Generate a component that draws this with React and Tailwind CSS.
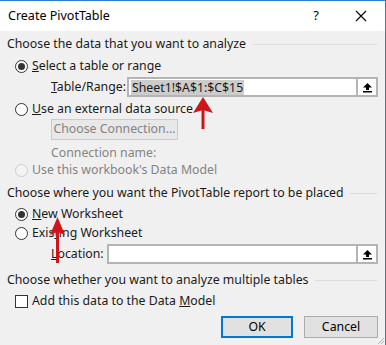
import React from "react";

const font = { fontFamily: '"Noto Sans", "Open Sans", sans-serif' };

function Radio({ checked, disabled }) {
  return (
    <span
      className={`w-[13px] h-[13px] rounded-full border flex items-center justify-center shrink-0 ${
        disabled ? "border-[#cccccc] bg-[#f4f4f4]" : "border-[#333333] bg-white"
      }`}
    >
      {checked && <span className="w-[7px] h-[7px] rounded-full bg-[#333333]" />}
    </span>
  );
}

function SectionHeader({ children }) {
  return (
    <div className="flex items-center h-4 pl-[7px] pr-[8px]">
      <span className="whitespace-nowrap">{children}</span>
      <span className="flex-1 h-px bg-[#dcdcdc] ml-[6px]" />
    </div>
  );
}

function RefInput({ value }) {
  return (
    <div className="flex-1 h-[20px] flex border-2 border-[#b4b4b4] bg-white">
      <div className="flex-1 flex items-center pl-[2px]">
        {value && <span className="bg-[#cccccc] leading-[15px] px-[1px]">{value}</span>}
      </div>
      <div className="w-[20px] border-l-2 border-[#b4b4b4] flex items-center justify-center bg-white">
        <svg width="11" height="11" viewBox="0 0 11 11">
          <path d="M5.5 1 L10 5.5 L7 5.5 L7 8 L4 8 L4 5.5 L1 5.5 Z" fill="#000" />
          <rect x="1" y="9" width="9" height="1.5" fill="#000" />
        </svg>
      </div>
    </div>
  );
}

// red annotation arrow pointing up, drawn at its own size
function RedArrow({ className, width, length, head }) {
  const mid = width / 2;
  return (
    <svg className={className} width={width} height={length} viewBox={`0 0 ${width} ${length}`}>
      <path d={`M${mid} 0 L${width} ${head} L${mid} ${head - 3} L0 ${head} Z`} fill="#d0141c" />
      <rect x={mid - 1.5} y={head - 4} width="3" height={length - head + 4} fill="#d0141c" />
    </svg>
  );
}

export default function App() {
  return (
    <div
      className="w-[386px] h-[345px] bg-[#f0f0f0] border-t border-r border-[#2b7cd3] text-[12.3px] text-[#1a1a1a] relative overflow-hidden"
      style={font}
    >
      {/* title bar */}
      <div className="h-[30px] bg-white flex items-center pl-[8px] pr-[18px]">
        <span className="flex-1 text-[12.5px] text-black">Create PivotTable</span>
        <span className="text-[13px] text-black mr-[36px]">?</span>
        <svg width="12" height="12" viewBox="0 0 12 12">
          <path d="M1 1 L11 11 M11 1 L1 11" stroke="#000" strokeWidth="1.1" />
        </svg>
      </div>

      <div className="pt-[5px]">
        <SectionHeader>Choose the data that you want to analyze</SectionHeader>

        <div className="flex items-center h-4 mt-[6px] pl-[15px] gap-[4px]">
          <Radio checked />
          <span>
            <u>S</u>elect a table or range
          </span>
        </div>

        <div className="flex items-center mt-[3px] pl-[51px] pr-[7px]">
          <span className="w-[76px]">
            <u>T</u>able/Range:
          </span>
          <RefInput value="Sheet1!$A$1:$C$15" />
        </div>

        <div className="flex items-center h-4 mt-[4px] pl-[15px] gap-[4px]">
          <Radio />
          <span>
            <u>U</u>se an external data source
          </span>
        </div>

        <div className="pl-[51px] mt-[2px]">
          <div className="w-[127px] h-[21px] border border-[#cccccc] bg-[#e8e8e8] text-[#838383] flex items-center justify-center">
            Choose Connection...
          </div>
        </div>

        <div className="pl-[51px] h-4 mt-[5px] flex items-center text-[#838383]">Connection name:</div>

        <div className="flex items-center h-4 mt-[1px] pl-[15px] gap-[4px] text-[#838383]">
          <Radio disabled />
          <span>Use this workbook's Data Model</span>
        </div>

        <div className="mt-[7px]">
          <SectionHeader>Choose where you want the PivotTable report to be placed</SectionHeader>
        </div>

        <div className="flex items-center h-4 mt-[5px] pl-[15px] gap-[4px]">
          <Radio checked />
          <span>
            <u>N</u>ew Worksheet
          </span>
        </div>

        <div className="flex items-center h-4 mt-[3px] pl-[15px] gap-[4px]">
          <Radio />
          <span>
            Exis<u>t</u>ing Worksheet
          </span>
        </div>

        <div className="flex items-center mt-[3px] pl-[51px] pr-[7px]">
          <span className="w-[56px]">
            <u>L</u>ocation:
          </span>
          <RefInput />
        </div>

        <div className="mt-[8px]">
          <SectionHeader>Choose whether you want to analyze multiple tables</SectionHeader>
        </div>

        <div className="flex items-center h-4 mt-[5px] pl-[15px] gap-[4px]">
          <span className="w-[13px] h-[13px] border border-[#333333] bg-white shrink-0" />
          <span>
            Add this data to the Data <u>M</u>odel
          </span>
        </div>

        <div className="flex justify-end gap-[11px] mt-[7px] pr-[7px]">
          <div className="w-[72px] h-[22px] border-2 border-[#0078d7] bg-[#e1e1e1] flex items-center justify-center text-black">
            OK
          </div>
          <div className="w-[74px] h-[22px] border border-[#adadad] bg-[#e1e1e1] flex items-center justify-center text-black">
            Cancel
          </div>
        </div>
      </div>

      {/* resize grip */}
      <svg className="absolute right-0 bottom-0" width="10" height="10" viewBox="0 0 10 10">
        <path d="M9 3 L3 9 M9 6 L6 9" stroke="#b0b0b0" strokeWidth="1" />
      </svg>

      {/* annotation arrows */}
      <RedArrow className="absolute left-[193px] top-[96px]" width={20} length={32} head={16} />
      <RedArrow className="absolute left-[50px] top-[216px]" width={15} length={46} head={18} />
    </div>
  );
}
